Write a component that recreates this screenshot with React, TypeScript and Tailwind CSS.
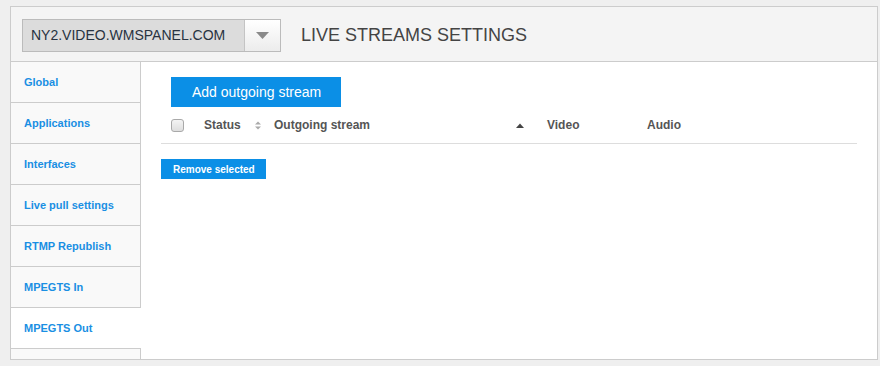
import React from "react";

const items = [
  "Global",
  "Applications",
  "Interfaces",
  "Live pull settings",
  "RTMP Republish",
  "MPEGTS In",
  "MPEGTS Out",
];

export default function App() {
  return (
    <div
      className="w-[880px] h-[366px] bg-[#efefef] pt-[6px] pl-[10px] overflow-hidden"
      style={{ fontFamily: '"Liberation Sans", Arial, sans-serif' }}
    >
      <div className="w-[868px] h-[354px] border border-[#cccccc] bg-white flex flex-col overflow-hidden">
        {/* Header */}
        <div className="h-[55px] shrink-0 bg-[#f4f4f4] border-b border-[#cccccc] flex items-start pl-[11px] pt-[12px]">
          <div className="flex h-[33px] w-[259px] border border-[#bbbbbb]">
            <div className="flex-1 bg-[#dcdcdc] flex items-center pl-[8px] text-[14px] text-[#283341]">
              NY2.VIDEO.WMSPANEL.COM
            </div>
            <div className="w-[36px] border-l border-[#c4c4c4] bg-gradient-to-b from-white to-[#ececec] flex items-center justify-center">
              <svg width="13" height="7" viewBox="0 0 13 7">
                <polygon points="0,0 13,0 6.5,7" fill="#8a8a8a" />
              </svg>
            </div>
          </div>
          <div className="ml-[20px] h-[33px] flex items-center text-[18px] text-[#444444]">
            LIVE STREAMS SETTINGS
          </div>
        </div>

        {/* Body */}
        <div className="flex flex-1 min-h-0">
          <div className="w-[130px] shrink-0 flex flex-col">
            {items.map((label) => {
              const active = label === "MPEGTS Out";
              return (
                <div
                  key={label}
                  className={
                    active
                      ? "h-[41px] shrink-0 bg-white border-b border-[#cccccc] flex items-center pl-[13px] text-[11px] font-bold text-[#1a8fe3]"
                      : "h-[41px] shrink-0 bg-[#f9f9f9] border-b border-r border-[#cccccc] flex items-center pl-[13px] text-[11px] font-bold text-[#1a8fe3]"
                  }
                >
                  {label}
                </div>
              );
            })}
            <div className="h-[41px] shrink-0 bg-[#f9f9f9] border-r border-[#cccccc]" />
          </div>

          <div className="flex-1 pl-[20px] pr-[20px] pt-[15px]">
            <button className="ml-[10px] h-[30px] w-[170px] bg-[#0b8fe6] text-white text-[14px] text-left pl-[21px]">
              Add outgoing stream
            </button>
            <div className="h-[37px] border-b border-[#dddddd] flex items-center text-[12px] font-bold text-[#555555]">
              <div className="w-[33px] pl-[10px] flex items-center">
                <div className="w-[13px] h-[13px] rounded-[3px] border border-[#a9a9a9] bg-gradient-to-b from-[#f4f4f4] to-[#dedede]" />
              </div>
              <div className="w-[70px] pl-[10px] flex items-center justify-between pr-[3px]">
                <span>Status</span>
                <svg width="6" height="9" viewBox="0 0 6 9">
                  <polygon points="0,3.5 6,3.5 3,0.5" fill="#aaaaaa" />
                  <polygon points="0,5.5 6,5.5 3,8.5" fill="#aaaaaa" />
                </svg>
              </div>
              <div className="w-[273px] pl-[10px] flex items-center justify-between pr-[13px]">
                <span>Outgoing stream</span>
                <svg width="8" height="5" viewBox="0 0 8 5">
                  <polygon points="0,5 8,5 4,0.5" fill="#444444" />
                </svg>
              </div>
              <div className="w-[100px] pl-[10px]">Video</div>
              <div className="flex-1 pl-[10px]">Audio</div>
            </div>
            <button className="mt-[15px] h-[20px] w-[105px] bg-[#0b8fe6] text-white text-[10px] font-bold text-left pl-[12px]">
              Remove selected
            </button>
          </div>
        </div>
      </div>
    </div>
  );
}
